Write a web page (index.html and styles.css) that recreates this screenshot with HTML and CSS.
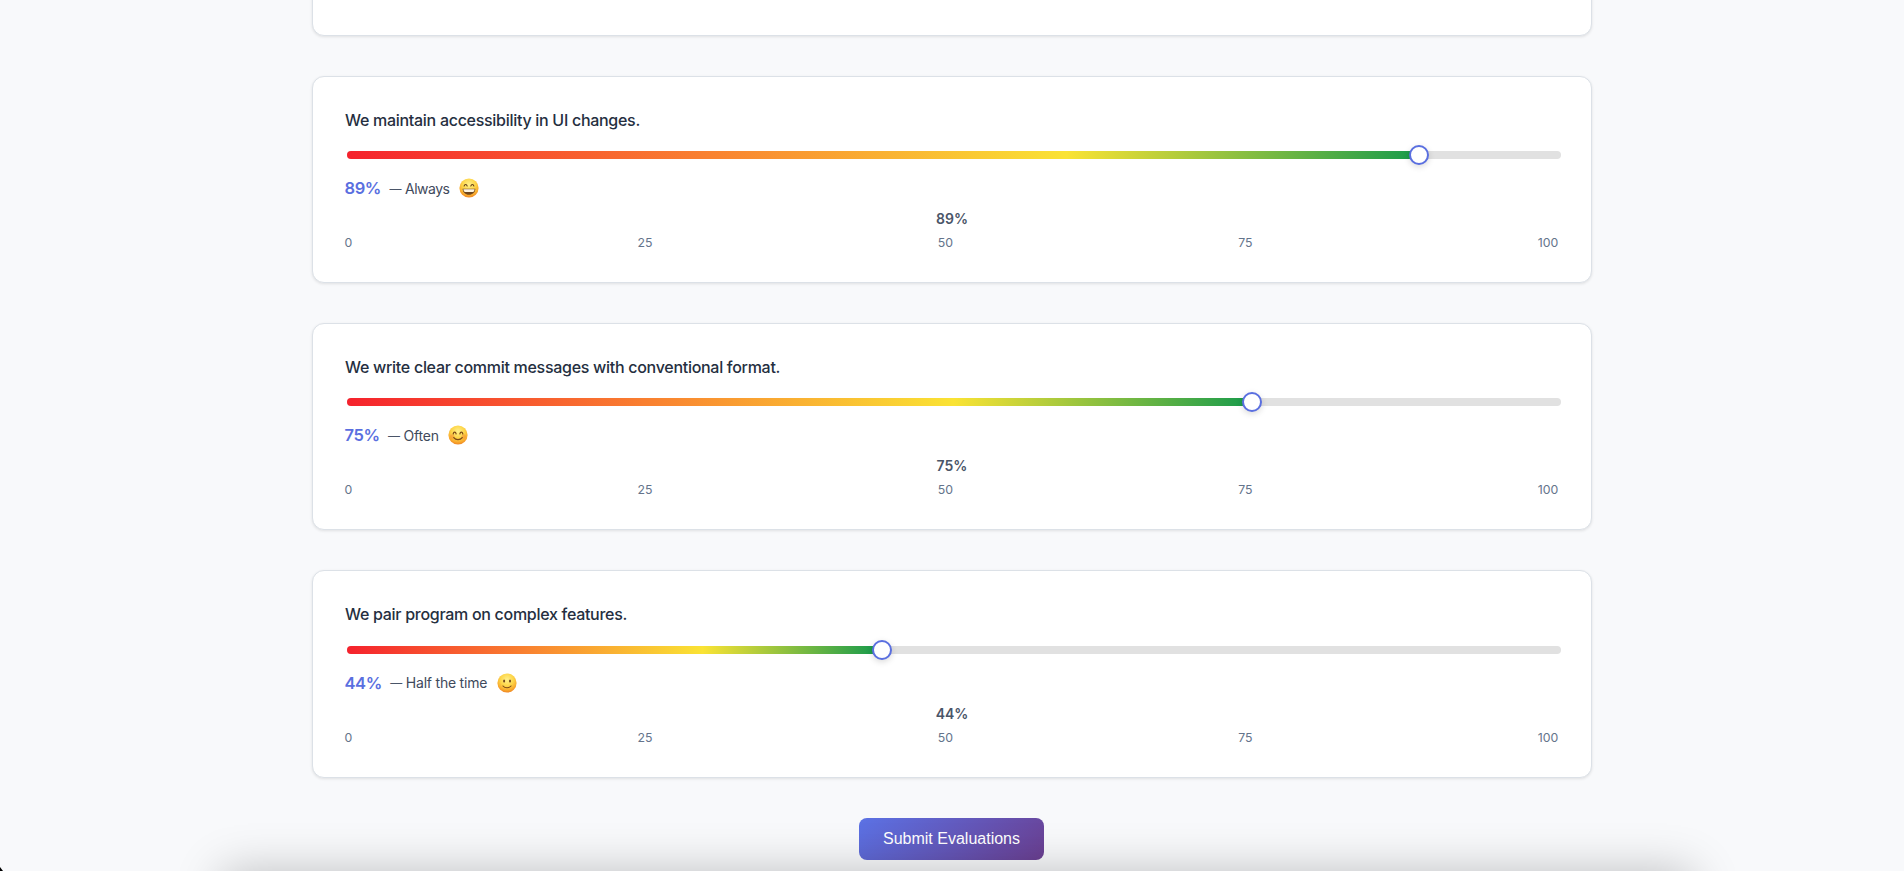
FILE: index.html
```html
<!DOCTYPE html>
<html lang="en">
<head>
<meta charset="utf-8">
<title>Team Evaluation</title>
<link rel="stylesheet" href="styles.css">
</head>
<body>
<svg class="defs" width="0" height="0" aria-hidden="true">
  <defs>
    <radialGradient id="face" cx="50%" cy="32%" r="68%">
      <stop offset="0" stop-color="#fff08a"/>
      <stop offset=".5" stop-color="#fdd548"/>
      <stop offset=".82" stop-color="#f8a92d"/>
      <stop offset="1" stop-color="#ee8322"/>
    </radialGradient>
  </defs>
</svg>
<main class="page">
  <section class="card">
    <div class="scale"><span>0</span><span>25</span><span>50</span><span>75</span><span>100</span></div>
  </section>

  <section class="card">
    <h2 class="question">We maintain accessibility in UI changes.</h2>
    <div class="slider" style="--value: .89"><div class="fill"></div><div class="thumb"></div></div>
    <div class="value">
      <strong class="percent">89%</strong><span class="dash">—</span><span class="answer answer-always">Always</span>
      <svg class="emoji" viewBox="0 0 20 20"><circle cx="10" cy="10" r="9.6" fill="url(#face)"/><path d="M5.2 8c.4-2 2.5-2 2.9 0M11.9 8c.4-2 2.5-2 2.9 0" fill="none" stroke="#65401b" stroke-width="1.2" stroke-linecap="round"/><path d="M3.6 10.8h12.8c-.2 3.500-2.800 6-6.400 6s-6.200-2.500-6.400-6z" fill="#70451c"/><path d="M4.400 11.300h11.200c-.1 1.300-.7 2.300-1.400 2.600H5.800c-.7-.3-1.300-1.300-1.400-2.600z" fill="#fff5df"/></svg>
    </div>
    <div class="current">89%</div>
    <div class="scale"><span>0</span><span>25</span><span>50</span><span>75</span><span>100</span></div>
  </section>

  <section class="card">
    <h2 class="question">We write clear commit messages with conventional format.</h2>
    <div class="slider" style="--value: .75"><div class="fill"></div><div class="thumb"></div></div>
    <div class="value">
      <strong class="percent">75%</strong><span class="dash">—</span><span class="answer">Often</span>
      <svg class="emoji" viewBox="0 0 20 20"><circle cx="10" cy="10" r="9.6" fill="url(#face)"/><circle cx="4.300" cy="11.500" r="2.200" fill="#f48a35" opacity=".45"/><circle cx="15.700" cy="11.500" r="2.200" fill="#f48a35" opacity=".45"/><path d="M5.200 8.900c.4-2.400 2.500-2.400 2.900 0M11.900 8.900c.4-2.400 2.500-2.400 2.900 0M5.800 12.600c2 2.700 6.400 2.700 8.400 0" fill="none" stroke="#7a4816" stroke-width="1.200" stroke-linecap="round"/></svg>
    </div>
    <div class="current">75%</div>
    <div class="scale"><span>0</span><span>25</span><span>50</span><span>75</span><span>100</span></div>
  </section>

  <section class="card">
    <h2 class="question">We pair program on complex features.</h2>
    <div class="slider" style="--value: .44"><div class="fill"></div><div class="thumb"></div></div>
    <div class="value">
      <strong class="percent">44%</strong><span class="dash">—</span><span class="answer">Half the time</span>
      <svg class="emoji" viewBox="0 0 20 20"><circle cx="10" cy="10" r="9.6" fill="url(#face)"/><ellipse cx="7.100" cy="7.900" rx="1" ry="1.500" fill="#70451c"/><ellipse cx="13" cy="7.900" rx="1" ry="1.500" fill="#70451c"/><path d="M6 13c2 2.300 6 2.300 8 0" fill="none" stroke="#7a4816" stroke-width="1.100" stroke-linecap="round"/></svg>
    </div>
    <div class="current">44%</div>
    <div class="scale"><span>0</span><span>25</span><span>50</span><span>75</span><span>100</span></div>
  </section>

  <button class="submit" type="button">Submit Evaluations</button>
</main>
<div class="panel-shadow"></div>
<div class="corner"></div>
</body>
</html>
```

FILE: styles.css
```css
* { box-sizing: border-box; }

html, body { height: 100%; }

body {
  margin: 0;
  overflow: hidden;
  background: #f8f9fb;
  color: #2d3748;
  font-family: Inter, "Liberation Sans", sans-serif;
}

.defs { position: absolute; }

.page {
  display: flex;
  flex-direction: column;
  gap: 40px;
  width: 1280px;
  margin: -51.3px auto 0;
}

.card {
  flex: none;
  padding: 32px;
  background: #fff;
  border: 1px solid #dce1e7;
  border-radius: 12px;
  box-shadow: 0 1px 3px rgba(0, 0, 0, .1);
}

.question {
  margin: 0;
  color: #252f3f;
  font-size: 16px;
  font-weight: 500;
  letter-spacing: -.29px;
  line-height: 23.4px;
  white-space: nowrap;
}

.slider {
  position: relative;
  width: 1214px;
  height: 8px;
  margin: 18.8px 0 17px 2px;
  border-radius: 4px;
  background: #e1e1e1;
}

.fill {
  width: calc(var(--value) * 100%);
  height: 8px;
  border-radius: 4px 0 0 4px;
  background: linear-gradient(90deg, #f5222d 0%, #f98030 33%, #fae334 66.6%, #13994c 100%);
}

.thumb {
  position: absolute;
  top: -6px;
  left: calc(var(--value) * (100% - 20px) - .5px);
  width: 20px;
  height: 20px;
  border: 2px solid #5a6fe0;
  border-radius: 50%;
  background: #fff;
  box-shadow: 0 2px 6px rgba(0, 0, 0, .15);
}

.value {
  display: flex;
  align-items: center;
  height: 24px;
  margin-left: -.5px;
}

.percent {
  margin-right: 8.5px;
  color: #5a6fe0;
  font-size: 16.5px;
  font-weight: 600;
  letter-spacing: -.4px;
}

.dash {
  width: 15.5px;
  color: #4a5568;
  font-size: 12px;
}

.answer {
  color: #3f4a5c;
  font-size: 14px;
  letter-spacing: -.22px;
}

.answer-always { letter-spacing: -.5px; }

.emoji {
  width: 20px;
  height: 20px;
  margin-left: 9.5px;
}

.current {
  margin-top: 9px;
  color: #4a5568;
  font-size: 14px;
  font-weight: 600;
  line-height: 20px;
  text-align: center;
}

.scale {
  display: flex;
  justify-content: space-between;
  margin: 6.1px .6px -1px -.6px;
  color: #64748b;
  font-size: 12.3px;
  line-height: 16px;
}

.submit {
  align-self: center;
  width: 185px;
  height: 42px;
  margin-right: 1px;
  padding: 0;
  border: 0;
  border-radius: 8px;
  background: linear-gradient(135deg, #5b72e5, #6b3f91);
  color: #fff;
  font: 16px "Liberation Sans", sans-serif;
}

/* Shadow cast by a panel that sits just below the viewport. */
.panel-shadow {
  position: fixed;
  top: 100%;
  left: 222px;
  right: 211px;
  height: 200px;
  box-shadow: 0 0 44px rgba(0, 0, 0, .23);
}

.corner {
  position: fixed;
  left: 0;
  bottom: 0;
  width: 3px;
  height: 4px;
  background: #000;
  clip-path: polygon(0 0, 100% 100%, 0 100%);
}
```
